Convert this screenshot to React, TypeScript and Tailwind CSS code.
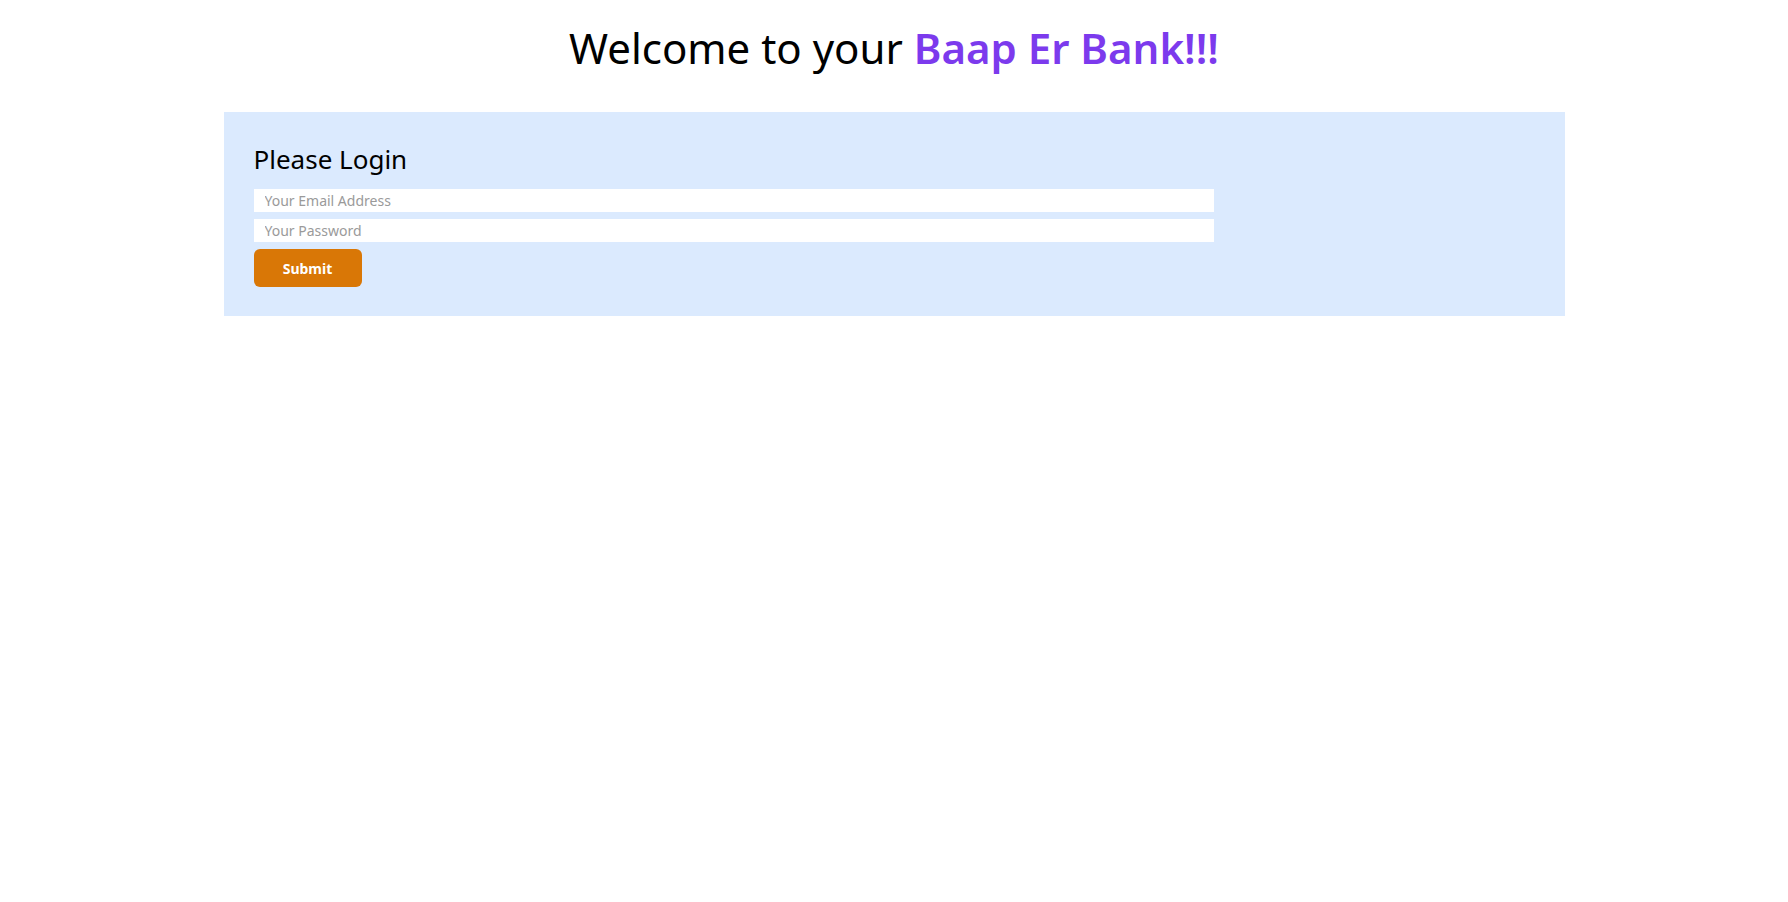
import React from 'react';

function App() {
  return (
    <div className="min-h-screen bg-white" style={{ fontFamily: '"Noto Sans", "Open Sans", sans-serif' }}>
      <h1 className="pt-[14px] text-center text-[42px] leading-[68px] text-black">
        Welcome to your <span className="font-semibold text-[#7c3aed]">Baap Er Bank!!!</span>
      </h1>

      <div className="mx-auto mt-[30px] w-3/4 bg-[#dbeafe] px-[30px] pt-6 pb-[29px]">
        <h2 className="mb-[11px] pt-[4px] text-[26px] leading-[38px] text-black">Please Login</h2>
        <form className="flex flex-col gap-[7px]" onSubmit={(e) => e.preventDefault()}>
          <input
            type="email"
            placeholder="Your Email Address"
            className="h-[23px] w-3/4 bg-white px-[11px] text-[14px] placeholder:text-[#9a9a9a] focus:outline-none"
          />
          <input
            type="password"
            placeholder="Your Password"
            className="h-[23px] w-3/4 bg-white px-[11px] text-[14px] placeholder:text-[#9a9a9a] focus:outline-none"
          />
          <div>
            <button
              type="submit"
              className="h-[38px] w-[108px] rounded-md bg-[#d97706] text-[14px] font-bold text-white"
            >
              Submit
            </button>
          </div>
        </form>
      </div>
    </div>
  );
}

export default App;
